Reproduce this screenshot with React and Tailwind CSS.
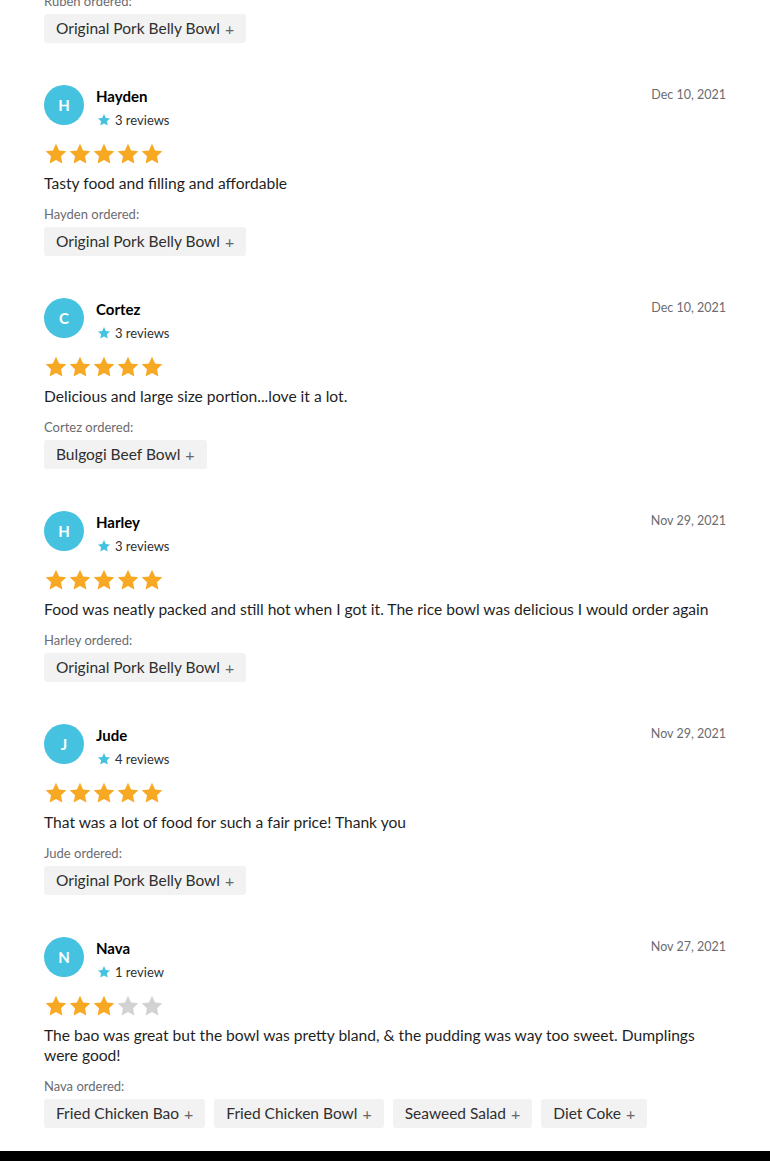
import React from "react";

const reviews = [
  {
    name: "Hayden",
    count: "3 reviews",
    date: "Dec 10, 2021",
    rating: 5,
    text: "Tasty food and filling and affordable",
    items: ["Original Pork Belly Bowl"],
  },
  {
    name: "Cortez",
    count: "3 reviews",
    date: "Dec 10, 2021",
    rating: 5,
    text: "Delicious and large size portion...love it a lot.",
    items: ["Bulgogi Beef Bowl"],
  },
  {
    name: "Harley",
    count: "3 reviews",
    date: "Nov 29, 2021",
    rating: 5,
    text: "Food was neatly packed and still hot when I got it. The rice bowl was delicious I would order again",
    items: ["Original Pork Belly Bowl"],
  },
  {
    name: "Jude",
    count: "4 reviews",
    date: "Nov 29, 2021",
    rating: 5,
    text: "That was a lot of food for such a fair price! Thank you",
    items: ["Original Pork Belly Bowl"],
  },
  {
    name: "Nava",
    count: "1 review",
    date: "Nov 27, 2021",
    rating: 3,
    text: "The bao was great but the bowl was pretty bland, & the pudding was way too sweet. Dumplings were good!",
    items: ["Fried Chicken Bao", "Fried Chicken Bowl", "Seaweed Salad", "Diet Coke"],
  },
];

function Star({ className }) {
  return (
    <svg viewBox="0 0 24 24" className={className} fill="currentColor">
      <path d="M12 1.8l3.1 6.6 7.2.9-5.3 5 1.4 7.1L12 17.9l-6.4 3.5 1.4-7.1-5.3-5 7.2-.9z" />
    </svg>
  );
}

function Chip({ label }) {
  return (
    <div className="h-[29px] px-3 flex items-center rounded-[3px] bg-[#f2f2f2] text-[15.5px] text-[#2f2f2f]">
      {label}
      <span className="ml-[5px] text-[#666] text-[16px]">+</span>
    </div>
  );
}

function Review({ r }) {
  return (
    <div className="mt-[42px]">
      <div className="flex items-start h-10">
        <div className="w-10 h-10 rounded-full bg-[#45c2e0] flex items-center justify-center text-white text-[15px] font-bold">
          {r.name[0]}
        </div>
        <div className="ml-3 flex-1">
          <div className="text-[15px] font-bold text-black leading-[20px] mt-[1px]">{r.name}</div>
          <div className="flex items-center mt-[5px]">
            <Star className="w-[14px] h-[14px] text-[#45c2e0] ml-[1px]" />
            <span className="ml-[4px] text-[13px] text-[#2f2f2f] leading-[18px]">{r.count}</span>
          </div>
        </div>
        <div className="text-[12.5px] text-[#6b6b70] leading-[18px] mt-[1px]">{r.date}</div>
      </div>
      <div className="flex mt-[17px] h-6">
        {[0, 1, 2, 3, 4].map((i) => (
          <Star
            key={i}
            className={`w-6 h-6 ${i < r.rating ? "text-[#f8a923]" : "text-[#d2d2d2]"}`}
          />
        ))}
      </div>
      <p className="mt-[7px] text-[15.6px] leading-[20px] text-[#1f1f1f] pr-4">{r.text}</p>
      <div className="mt-[12px] text-[13px] leading-[18px] text-[#6b6b70]">{r.name} ordered:</div>
      <div className="mt-[4px] flex flex-wrap gap-[9px]">
        {r.items.map((it) => (
          <Chip key={it} label={it} />
        ))}
      </div>
    </div>
  );
}

export default function App() {
  return (
    <div className="bg-white overflow-hidden" style={{ fontFamily: "Lato, 'Noto Sans', sans-serif" }}>
      <div className="px-[44px]">
        <div className="-mt-[8px] text-[13px] leading-[18px] text-[#6b6b70]">Ruben ordered:</div>
        <div className="mt-[4px] flex">
          <Chip label="Original Pork Belly Bowl" />
        </div>
        {reviews.map((r) => (
          <Review key={r.name} r={r} />
        ))}
      </div>
      <div className="mt-[23px] h-40 bg-black" />
    </div>
  );
}
